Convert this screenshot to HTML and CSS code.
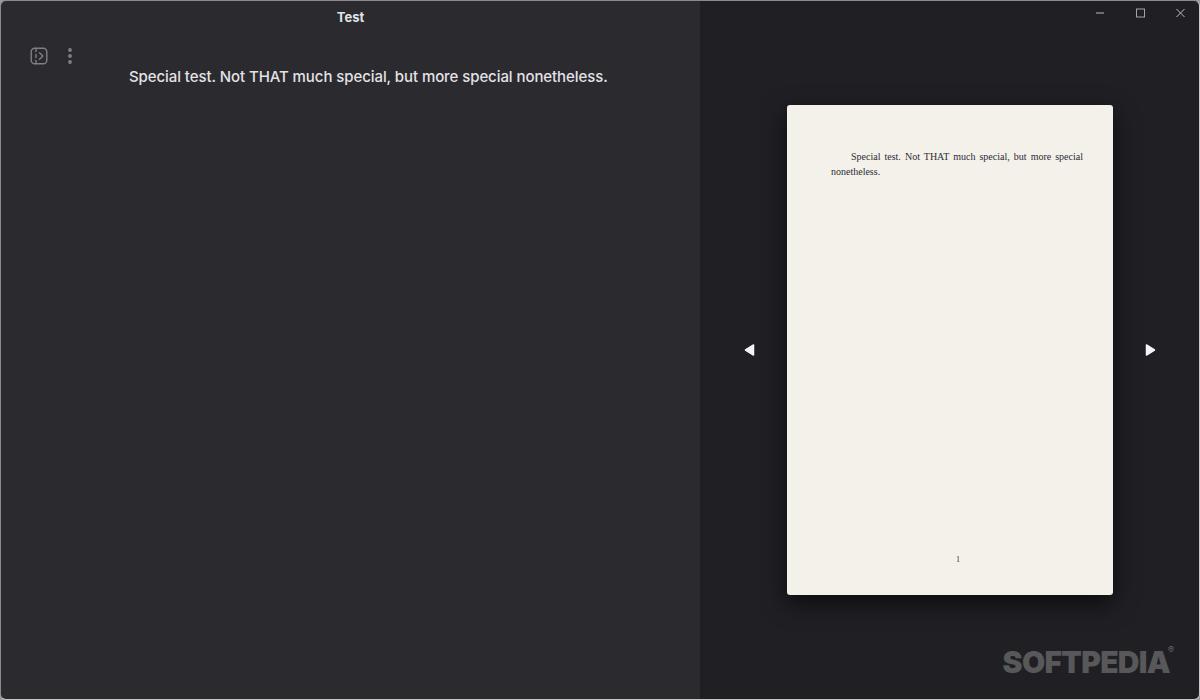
FILE: index.html
```
<!DOCTYPE html>
<html lang="en">
<head>
<meta charset="utf-8">
<title>Test</title>
<link rel="stylesheet" href="styles.css">
</head>
<body>
<div class="window">
  <section class="editor">
    <header class="title">Test</header>
    <div class="editor-body">
      <div class="tools">
        <button class="tool" aria-label="Toggle panel">
          <svg width="18" height="18" viewBox="0 0 18 18" fill="none" stroke="#807f85" stroke-width="1.4" stroke-linecap="round" stroke-linejoin="round"><rect x="1.200" y="1.200" width="15.600" height="15.600" rx="3.500"/><path d="M6 1.500v3M6 7.500v3M6 13.500v3"/><path d="M9.500 5.800l3.400 3.200-3.400 3.200"/></svg>
        </button>
        <button class="tool" aria-label="More">
          <svg width="6" height="16" viewBox="0 0 6 16" fill="#807f85"><circle cx="3" cy="2" r="1.900"/><circle cx="3" cy="8" r="1.900"/><circle cx="3" cy="14" r="1.900"/></svg>
        </button>
      </div>
      <p class="doc-text">Special test. Not THAT much special, but more special nonetheless.</p>
    </div>
  </section>
  <section class="preview">
    <div class="controls">
      <svg width="9" height="10" viewBox="0 0 9 10" stroke="#88888e" stroke-width="1.500" fill="none"><path d="M0 5h8"/></svg>
      <svg width="9" height="10" viewBox="0 0 9 10" stroke="#a3a3a8" stroke-width="1" fill="none"><rect x=".500" y="1" width="8" height="8"/></svg>
      <svg width="9" height="10" viewBox="0 0 9 10" stroke="#c0c0c4" stroke-width="1" fill="none"><path d="M.500 1l8 8M8.500 1l-8 8"/></svg>
    </div>
    <div class="stage">
      <svg class="arrow" width="12" height="14" viewBox="0 0 12 14"><path d="M1.500 7L9.500 2v10z" fill="#f4f4f8" stroke="#f4f4f8" stroke-width="1.500" stroke-linejoin="round"/></svg>
      <article class="page">
        <p class="page-text">Special test. Not THAT much special, but more special nonetheless.</p>
        <div class="page-num">1</div>
      </article>
      <svg class="arrow" width="12" height="14" viewBox="0 0 12 14"><path d="M10.500 7L2.500 2v10z" fill="#f4f4f8" stroke="#f4f4f8" stroke-width="1.500" stroke-linejoin="round"/></svg>
    </div>
    <div class="mark">SOFTPEDIA<sup class="reg">®</sup></div>
  </section>
</div>
</body>
</html>
```
FILE: styles.css
```
* { box-sizing: border-box; }
html, body { margin: 0; height: 100%; background: #9a9a9a; overflow: hidden; }
.window {
  width: 1200px; height: 700px; display: flex;
  border: 1px solid #8a8a8c; border-bottom-color: #c8c8c8; border-right-color: #c8c8c8;
  border-radius: 6px; overflow: hidden;
  font-family: Inter, "Open Sans", sans-serif;
}
.editor { width: 699px; background: #2b2a2f; display: flex; flex-direction: column; }
.title { height: 31px; padding-top: 9px; text-align: center; font-size: 13px; line-height: 15px; font-weight: 700; color: #dfe3ea; }
.editor-body { display: flex; padding: 12px 0 0 29px; }
.tools { display: flex; gap: 19px; align-items: center; height: 24px; margin-right: 56px; }
.tool { padding: 0; border: 0; background: none; display: flex; }
.doc-text { margin: 22px 0 0; font-size: 15px; line-height: 22px; font-weight: 500; color: #e3e2e6; letter-spacing: -0.08px; white-space: nowrap; }
.preview { flex: 1; background: #201f24; display: flex; flex-direction: column; position: relative; }
.controls { height: 24px; display: flex; justify-content: flex-end; align-items: center; gap: 31px; padding: 0 14px 0 0; }
.stage { flex: 1; display: flex; align-items: center; justify-content: space-between; padding: 0 43px 24px 44px; }
.arrow { display: block; }
.page {
  width: 326px; height: 490px; background: #f4f1ea; border-radius: 3px;
  box-shadow: 0 8px 24px rgba(0,0,0,.65);
  padding: 44px 30px 0 44px; display: flex; flex-direction: column;
  font-family: "Liberation Serif", serif; color: #2b2b33;
}
.page-text { margin: 0; font-size: 10px; line-height: 15px; text-align: justify; text-indent: 20px; }
.page-num { margin-top: auto; margin-bottom: 29px; margin-left: 125px; font-size: 8px; line-height: 12px; color: #2b3a34; }
.mark {
  position: absolute; right: 29px; bottom: 25px;
  font-family: Inter, sans-serif; font-weight: 900; font-size: 30px; line-height: 24px;
  color: #58585a; letter-spacing: -0.7px;
}
.reg { position: absolute; top: -5px; right: -4px; font-size: 9px; line-height: 10px; font-weight: 400; color: #6a6a6c; letter-spacing: 0; }
```
